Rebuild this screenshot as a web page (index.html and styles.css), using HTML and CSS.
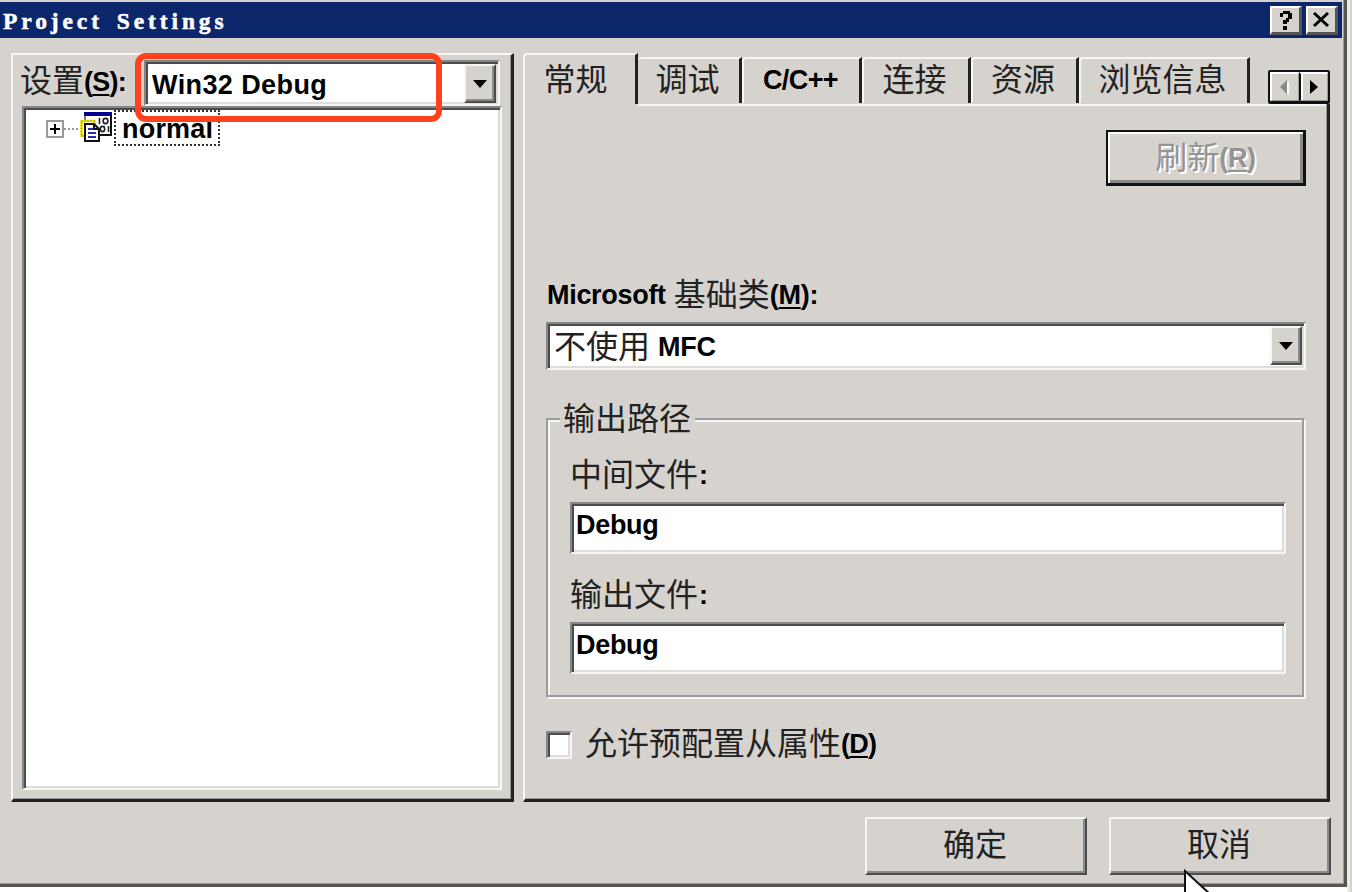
FILE: index.html
```html
<!DOCTYPE html>
<html lang="zh-CN">
<head>
<meta charset="utf-8">
<title>Project Settings</title>
<link rel="stylesheet" href="styles.css">
</head>
<body>
<div class="window">
  <header class="titlebar">
    <h1 class="title">Project Settings</h1>
    <button class="caption"><svg width="28" height="26"><path d="M8 8V6h3V4h7v2h2v6h-3v3h-2v2h-4v-4h3v-2h2V7h-5v3H8zM11 19h4v4h-4z"/></svg></button>
    <button class="caption"><svg width="28" height="26"><path d="M6 6l14 13M20 6L6 19" stroke="#000" stroke-width="3"/></svg></button>
  </header>
  <main class="panels">
    <section class="left">
      <div class="config">
        <label class="config-label">设置<b>(<u>S</u>):</b></label>
        <div class="combo config-combo"><b class="value">Win32 Debug</b><button class="drop"><svg width="14" height="8"><path d="M0 0h14L7 8z"/></svg></button></div>
      </div>
      <div class="tree">
        <svg class="expander" width="18" height="18"><path d="M1 1h16v16H1z" fill="#fff" stroke="#999" stroke-width="2"/><path d="M4 9h10M9 4v10" stroke="#000" stroke-width="2"/></svg>
        <svg class="branch" width="16" height="18"><path d="M0 9h16" stroke="#999" stroke-width="2" stroke-dasharray="2 2"/></svg>
        <svg class="project" width="33" height="31">
          <path d="M5 1h26v22H5z" fill="#fff" stroke="#777" stroke-width="2"/><path d="M4 0h28v4H4z" fill="#00008c"/><path d="M31 4v19H19" fill="none" stroke="#111" stroke-width="2"/>
          <g fill="none" stroke="#222" stroke-width="1.6"><path d="M19.5 6v6M28.5 14v6"/><ellipse cx="25.5" cy="9" rx="2.4" ry="2.6"/><ellipse cx="22.5" cy="17" rx="2.2" ry="2.6"/></g>
          <path d="M1.500 9h13v15h-13z" fill="#fff" stroke="#e8e000" stroke-width="2.500"/><path d="M1.500 9h13v15h-13z" fill="none" stroke="#777" stroke-dasharray="1 2"/>
          <path d="M5 12h9l5 5v12H5z" fill="#fff" stroke="#111" stroke-width="2"/><path d="M14 12v5h5" fill="none" stroke="#111" stroke-width="2"/><path d="M8 17h5M8 21h8M8 25h8" stroke="#2c2cae" stroke-width="2"/>
        </svg>
        <b class="node">normal</b>
      </div>
    </section>
    <section class="right">
      <nav class="tabs">
        <div class="tab active">常规</div>
        <div class="tab t2">调试</div>
        <div class="tab t3"><b>C/C++</b></div>
        <div class="tab t4">连接</div>
        <div class="tab t5">资源</div>
        <div class="tab t6">浏览信息</div>
        <div class="scroller">
          <button><svg width="12" height="16"><path d="M10 2v14L3 9z" fill="#fff"/><path d="M8 1v14L1 8z" fill="#888"/></svg></button>
          <button><svg width="8" height="14"><path d="M0 0v14l8-7z"/></svg></button>
        </div>
      </nav>
      <div class="page">
        <button class="refresh"><span>刷新<b>(<u>R</u>)</b></span></button>
        <label class="mfc-label"><b class="ms">Microsoft</b>基础类<b>(<u>M</u>):</b></label>
        <div class="combo mfc-combo"><span class="value">不使用<b class="mfc">MFC</b></span><button class="drop"><svg width="14" height="8"><path d="M0 0h14L7 8z"/></svg></button></div>
        <fieldset class="group">
          <legend>输出路径</legend>
          <label class="field-label">中间文件<b>:</b></label>
          <div class="edit"><b>Debug</b></div>
          <label class="field-label second">输出文件<b>:</b></label>
          <div class="edit"><b>Debug</b></div>
        </fieldset>
        <label class="check"><span class="box"></span><span>允许预配置从属性<b>(<u>D</u>)</b></span></label>
      </div>
    </section>
  </main>
  <footer class="actions">
    <button class="push">确定</button>
    <button class="push">取消</button>
  </footer>
</div>
<div class="highlight"></div>
<svg class="cursor" width="34" height="40"><path d="M2 2v34l8-7 6 10 5-3-5-10h12z" fill="#fff" stroke="#111" stroke-width="2"/></svg>
</body>
</html>
```
FILE: styles.css
```css
* { box-sizing: border-box; }
html { overflow: hidden; height: 892px; }
body {
  margin: 0;
  width: 1352px;
  height: 892px;
  position: relative;
  overflow: hidden;
  background: linear-gradient(90deg, #fff 0 1347px, #eceae6 1347px 1350px, #d6d3ce 1350px);
  font: 400 32px/36px "Noto Sans CJK SC", sans-serif;
  color: #222;
  white-space: nowrap;
}
button { margin: 0; padding: 0; border: 0; background: #d6d3ce; font: inherit; color: inherit; display: flex; align-items: center; justify-content: center; }
b { font: 700 27px/30px "Liberation Sans", sans-serif; letter-spacing: -.3px; color: #000; vertical-align: 2px; }
u { text-decoration-thickness: 2px; text-underline-offset: 3px; text-decoration-skip-ink: none; }
svg { display: block; flex: none; }

.window {
  width: 1347px;
  height: 887px;
  padding-top: 2px;
  background: #d6d3ce;
  border: solid #555;
  border-width: 0 3px 3px 0;
  box-shadow: inset -1px -1px #999;
}
.titlebar { display: flex; align-items: flex-start; width: 1342px; height: 36px; padding: 4px 4px 0 3px; background: #0c266b; }
.title { flex: 1; margin: 0; font: 700 23.5px/30px "Liberation Serif", serif; letter-spacing: 3.9px; word-spacing: 4px; color: #fff; -webkit-text-stroke: .5px #fff; }
.caption { width: 32px; height: 29px; border: solid; border-width: 2px 3px 3px 2px; border-color: #fff #555 #555 #fff; margin-left: 4px; }

.panels { display: flex; gap: 9px; padding: 15px 0 0 11px; height: 764px; }
.left { width: 503px; height: 749px; padding: 5px 9px 9px; border: solid; border-width: 2px 3px 3px 2px; border-color: #f7f6f3 #222 #222 #f7f6f3; box-shadow: inset -1px -1px #999; }
.config { display: flex; height: 46px; }
.config-label { width: 122px; margin-left: -2px; }
.config-label b { vertical-align: 1px; letter-spacing: -.8px; }

/* Sunken controls share one two-tone bevel. */
.combo, .tree, .edit, .box {
  background: #fff;
  border: 2px solid;
  border-color: #868686 #f7f6f3 #f7f6f3 #868686;
  box-shadow: inset 2px 2px #4c4c4c, inset -2px -2px #dfddd9;
}
.combo { display: flex; height: 48px; padding: 2px 2px 0 2px; }
.config-combo { width: 356px; height: 46px; margin-left: 2px; }
.value { flex: 1; padding-left: 4px; line-height: 42px; letter-spacing: .4px; }
.drop, .push {
  border: 2px solid;
  border-color: #f7f6f3 #4c4c4c #4c4c4c #f7f6f3;
  box-shadow: inset -2px -2px #8a8a8a;
}
.drop { width: 32px; height: 39px; padding: 0 1px 0 0; }
.tree { display: flex; align-items: flex-start; width: 480px; height: 684px; padding: 2px 0 0 22px; }
.expander { margin-top: 10px; }
.branch { margin-top: 10px; }
.project { margin-top: 2px; }
.node { width: 106px; height: 36px; margin-left: 1px; padding-left: 6px; line-height: 34px; border: 2px dotted #333; letter-spacing: .2px; }

.right { width: 807px; height: 749px; }
.tabs { display: flex; align-items: flex-end; height: 51px; }
.tab { height: 46px; border: solid; border-width: 2px 3px 0 2px; border-color: #f7f6f3 #222 #222 #f7f6f3; border-radius: 4px 0 0 0; text-align: center; margin-bottom: 1px; }
.tab.active { width: 115px; height: 51px; margin-bottom: 0; padding: 4px 9px 0 0; }
.t2 { width: 104px; padding-right: 2px; border-left: 0; }
.t3 { width: 120px; padding-right: 2px; }
.t3 b { letter-spacing: -.6px; vertical-align: 2px; }
.t4 { width: 109px; padding-right: 3px; }
.t5 { width: 108px; padding-right: 3px; }
.t6 { width: 171px; padding-right: 3px; }
.scroller { display: flex; width: 62px; height: 34px; margin-left: auto; border: solid #111; border-width: 2px 2px 3px; border-radius: 2px; }
.scroller button { flex: 1; border: solid; border-width: 2px 1px 1px 2px; border-color: #fff #999 #999 #fff; }
.scroller button + button { border-left: 2px solid #111; box-shadow: inset 2px 0 #fff; }
.page { height: 698px; padding: 24px 21px 0; border: solid; border-width: 2px 3px 3px 2px; border-color: #f7f6f3 #222 #222 #f7f6f3; box-shadow: inset -1px -1px #999; }
/* The active tab merges with the page below it. */
.page { border-top: 0; padding-top: 26px; background: linear-gradient(#f7f6f3, #f7f6f3) 113px 0 / 100% 2px no-repeat; }
.refresh { width: 200px; height: 56px; margin-left: 560px; border: solid #111; border-width: 2px 3px 3px 2px; box-shadow: inset 2px 2px #fff, inset -3px -3px #888; color: #949494; text-shadow: 2px 2px #fff; padding-bottom: 6px; }
.refresh b { color: #949494; }
.mfc-label { display: block; margin-top: 88px; height: 36px; padding-left: 1px; }
.ms { margin-right: 8px; }
.mfc-combo { width: 760px; margin-top: 12px; }
.mfc-combo .value { line-height: 36px; letter-spacing: 0; }
.mfc { margin-left: 8px; }
.group { min-width: 0; width: 758px; height: 296px; margin: 31px 0 0; padding: 17px 18px 0 22px; border: 2px solid #9b9a9e; box-shadow: 2px 2px #f7f6f3, inset 2px 2px #f7f6f3; }
.group legend { margin-left: -10px; padding: 0 4px 0 3px; height: 36px; line-height: 30px; background: #d6d3ce; }
.field-label { display: block; height: 36px; }
.field-label b { margin-left: 1px; }
.second { margin-top: 20px; }
.edit { width: 716px; height: 52px; margin-top: 12px; padding: 2px 0 0 4px; }
.edit b { display: block; line-height: 39px; }
.check { display: flex; align-items: flex-start; margin-top: 26px; }
.box { width: 26px; height: 28px; margin: 8px 13px 0 0; }
.check b { letter-spacing: -.8px; }

.actions { display: flex; gap: 22px; padding: 15px 0 0 865px; }
.push { width: 222px; height: 58px; padding: 0 2px 8px 0; }

.highlight { position: absolute; left: 135px; top: 53px; width: 307px; height: 69px; border: 6px solid #ff411c; border-radius: 11px; }
.cursor { position: absolute; left: 1183px; top: 869px; }
```
